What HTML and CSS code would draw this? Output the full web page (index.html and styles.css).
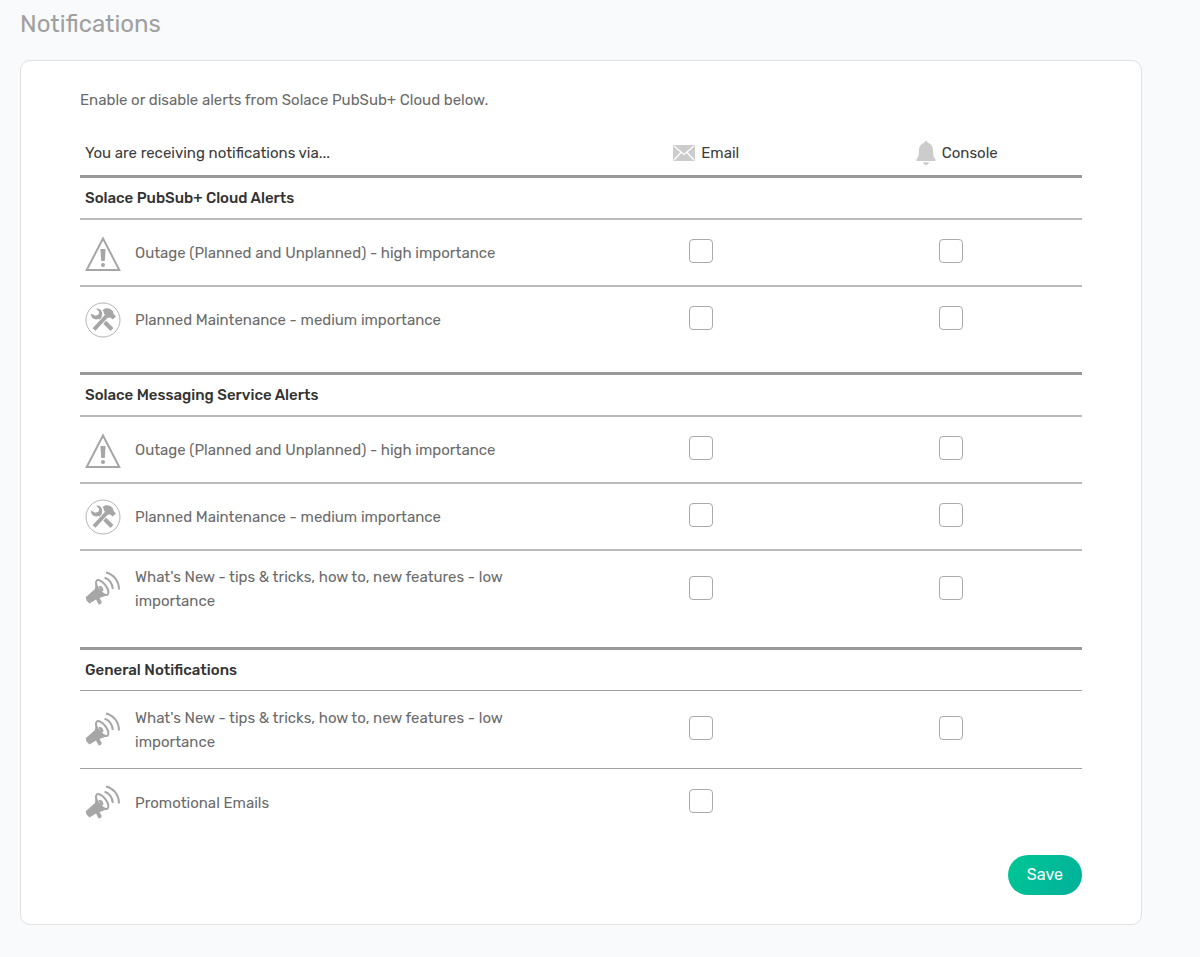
FILE: index.html
```html
<!DOCTYPE html>
<html lang="en">
<head>
<meta charset="utf-8">
<title>Notifications</title>
<link rel="stylesheet" href="styles.css">
</head>
<body>
<svg class="defs" aria-hidden="true">
  <symbol id="warning" viewBox="0 0 36 36">
    <path d="M18 3.500 34.300 35H1.700Z" fill="none" stroke="#a6a6a6" stroke-width="2"/>
    <path d="M15.400 14h5.200l-.8 12h-3.600z" fill="#a6a6a6"/>
    <circle cx="18" cy="30" r="2" fill="#a6a6a6"/>
  </symbol>
  <symbol id="tools" viewBox="0 0 36 36">
    <circle cx="18" cy="18" r="17" fill="none" stroke="#b4b4b4" stroke-width="1"/>
    <path d="M14 14.500 27 27.500" stroke="#a6a6a6" stroke-width="4"/>
    <path d="M6 11.500c-.3 4.500 3.500 7 7.500 5.500l3.500-3.500c1-4-1.500-7.500-6-7l3.200 3.300-.8 3-3.200.9z" fill="#a6a6a6"/>
    <path d="M9 27.500 23 12.500" stroke="#fff" stroke-width="5.500"/>
    <path d="M9 27.500 23 12.500" stroke="#a6a6a6" stroke-width="4"/>
    <path d="m17.500 8 2.500-1.500c3.500-.6 6 .5 8 3l.7 2.800 2.300 1.900-3.200 3.300-2.500-2-2.300.2-4-4-.3-2z" fill="#a6a6a6"/>
  </symbol>
  <symbol id="horn" viewBox="0 0 36 36">
    <path d="M11 9.500 10 18 .7 26.200 1.500 29.500 4.500 32.500 11 28.600l2.700 4.900c1.800-.1 3-1.200 3-2.700L14.500 27l8.500-3z" fill="#a6a6a6"/>
    <ellipse cx="17.200" cy="16.500" rx="4" ry="8.800" transform="rotate(-38 17.200 16.500)" fill="#fff" stroke="#a6a6a6" stroke-width="2"/>
    <path d="M13.500 15.500c2.500-1.500 4.800.7 5 4l-2 1.500z" fill="#a6a6a6"/>
    <path d="M19.500 6.700c4.500 1 8 5.500 8.300 11.300M21 1.500C28 3 34 9.500 34 18.500" fill="none" stroke="#a6a6a6" stroke-width="2"/>
  </symbol>
</svg>
<main class="page">
  <h1 class="title">Notifications</h1>
  <form class="card">
    <p class="intro">Enable or disable alerts from Solace PubSub+ Cloud below.</p>
    <table class="alerts">
      <colgroup><col class="col-name"><col class="col-channel"><col class="col-channel"></colgroup>
      <thead>
        <tr>
          <th scope="col">You are receiving notifications via...</th>
          <th scope="col" class="channel"><span class="channel-label"><svg class="mail" viewBox="0 0 22 16" aria-hidden="true"><rect width="22" height="16" rx="1" fill="#ccc"/><path d="m1 1 10 8.500L21 1M1 15l7-7.500M21 15l-7-7.500" fill="none" stroke="#fff" stroke-width="1.300"/></svg>Email</span></th>
          <th scope="col" class="channel"><span class="channel-label"><svg class="bell" viewBox="0 0 20 24" aria-hidden="true"><path d="M10 0c1 0 1.700.7 1.700 1.700C15.500 2.700 17 6 17 9.500c0 5 1 7 2.500 8.700V20H.5v-1.800C2 16.500 3 14.500 3 9.500 3 6 4.500 2.700 8.300 1.700 8.300.7 9 0 10 0zM7 21.300h6c-.3 1.600-1.500 2.700-3 2.700s-2.700-1.100-3-2.700z" fill="#ccc"/></svg>Console</span></th>
        </tr>
      </thead>
      <tbody class="group">
        <tr class="section"><th colspan="3" scope="colgroup">Solace PubSub+ Cloud Alerts</th></tr>
        <tr>
          <td><div class="alert"><svg class="icon" aria-hidden="true"><use href="#warning"/></svg><span class="text">Outage (Planned and Unplanned) - high importance</span></div></td>
          <td class="choice"><input class="check" type="checkbox" aria-label="Cloud outage by email"></td>
          <td class="choice"><input class="check" type="checkbox" aria-label="Cloud outage in console"></td>
        </tr>
        <tr>
          <td><div class="alert"><svg class="icon" aria-hidden="true"><use href="#tools"/></svg><span class="text">Planned Maintenance - medium importance</span></div></td>
          <td class="choice"><input class="check" type="checkbox" aria-label="Cloud maintenance by email"></td>
          <td class="choice"><input class="check" type="checkbox" aria-label="Cloud maintenance in console"></td>
        </tr>
      </tbody>
      <tbody class="group">
        <tr class="section"><th colspan="3" scope="colgroup">Solace Messaging Service Alerts</th></tr>
        <tr>
          <td><div class="alert"><svg class="icon" aria-hidden="true"><use href="#warning"/></svg><span class="text">Outage (Planned and Unplanned) - high importance</span></div></td>
          <td class="choice"><input class="check" type="checkbox" aria-label="Service outage by email"></td>
          <td class="choice"><input class="check" type="checkbox" aria-label="Service outage in console"></td>
        </tr>
        <tr>
          <td><div class="alert"><svg class="icon" aria-hidden="true"><use href="#tools"/></svg><span class="text">Planned Maintenance - medium importance</span></div></td>
          <td class="choice"><input class="check" type="checkbox" aria-label="Service maintenance by email"></td>
          <td class="choice"><input class="check" type="checkbox" aria-label="Service maintenance in console"></td>
        </tr>
        <tr>
          <td><div class="alert"><svg class="icon" aria-hidden="true"><use href="#horn"/></svg><span class="text">What's New - tips &amp; tricks, how to, new features - low importance</span></div></td>
          <td class="choice"><input class="check" type="checkbox" aria-label="Service news by email"></td>
          <td class="choice"><input class="check" type="checkbox" aria-label="Service news in console"></td>
        </tr>
      </tbody>
      <tbody class="group">
        <tr class="section"><th colspan="3" scope="colgroup">General Notifications</th></tr>
        <tr>
          <td><div class="alert"><svg class="icon" aria-hidden="true"><use href="#horn"/></svg><span class="text">What's New - tips &amp; tricks, how to, new features - low importance</span></div></td>
          <td class="choice"><input class="check" type="checkbox" aria-label="General news by email"></td>
          <td class="choice"><input class="check" type="checkbox" aria-label="General news in console"></td>
        </tr>
        <tr>
          <td><div class="alert"><svg class="icon" aria-hidden="true"><use href="#horn"/></svg><span class="text">Promotional Emails</span></div></td>
          <td class="choice"><input class="check" type="checkbox" aria-label="Promotional emails by email"></td>
          <td></td>
        </tr>
      </tbody>
    </table>
    <div class="actions"><button class="save" type="button">Save</button></div>
  </form>
</main>
</body>
</html>
```
FILE: styles.css
```css
* { box-sizing: border-box; }
body { margin: 0; background: #f8fafc; color: #6b6b6b; font: 15px/24px Rubik, Roboto, sans-serif; }
.defs { position: absolute; width: 0; height: 0; }
.page { padding: 8px 58px 32px 20px; }
.title { margin: 0; font-size: 24px; line-height: 32px; font-weight: 400; color: #a0a0a0; }
.card { margin-top: 20px; padding: 27px 59px 29px; background: #fff; border: 1px solid #dfe1e3; border-radius: 10px; }
.intro { margin: 0 0 18px; }
.alerts { width: 100%; border-collapse: separate; border-spacing: 0; table-layout: fixed; }
.col-name { width: 50%; }
.col-channel { width: 25%; }
.alerts th, .alerts td { padding: 0 5px; text-align: left; }
.alerts thead th { height: 45px; font-weight: 400; color: #3c3c3c; }
.alerts .channel { text-align: center; }
.channel-label { display: inline-flex; align-items: center; gap: 6px; vertical-align: middle; }
.mail { width: 22px; height: 16px; }
.bell { width: 20px; height: 24px; }
.alerts .section th { height: 43px; border-top: 3px solid #999; font-weight: 500; color: #333; }
.group td { height: 67px; border-top: 2px solid #bbb; }
.group:last-child td { border-top: 1px solid #a0a0a0; }
.group tr:last-child td { height: 87px; padding-bottom: 20px; }
.alert { display: flex; align-items: center; gap: 14px; padding: 14px 70px 14px 0; }
.group:last-child .alert { padding-top: 15px; }
.icon { flex: none; width: 36px; height: 36px; }
.alerts .choice { padding-right: 16px; padding-bottom: 4px; text-align: center; }
.alerts tr:last-child .choice { padding-bottom: 24px; }
.check { appearance: none; width: 24px; height: 24px; margin: 0; border: 1px solid #aaa; border-radius: 4px; background: #fff; vertical-align: middle; }
.check:checked { background: #00b894; }
.actions { display: flex; justify-content: flex-end; }
.save { height: 40px; padding: 0 19px; border: 0; border-radius: 20px; background: linear-gradient(120deg, #00c794, #00b09b); color: #fff; font: 16px/24px Rubik, Roboto, sans-serif; }
```
